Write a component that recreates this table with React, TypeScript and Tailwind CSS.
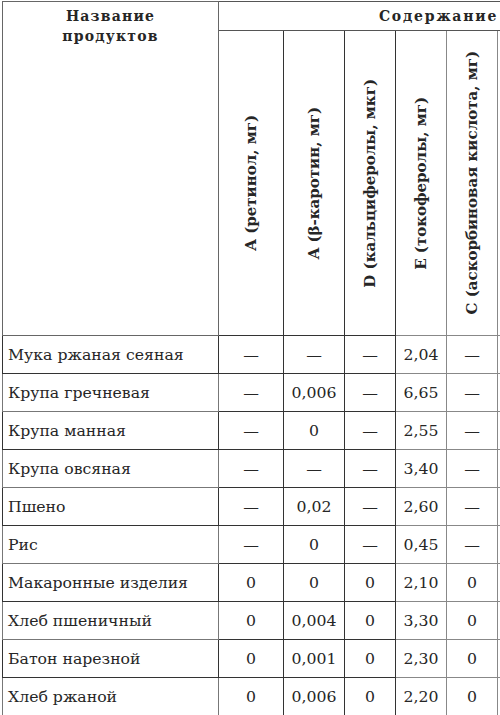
const rows: [string, string, string, string, string, string][] = [
  ['Мука ржаная сеяная', '—', '—', '—', '2,04', '—'],
  ['Крупа гречневая', '—', '0,006', '—', '6,65', '—'],
  ['Крупа манная', '—', '0', '—', '2,55', '—'],
  ['Крупа овсяная', '—', '—', '—', '3,40', '—'],
  ['Пшено', '—', '0,02', '—', '2,60', '—'],
  ['Рис', '—', '0', '—', '0,45', '—'],
  ['Макаронные изделия', '0', '0', '0', '2,10', '0'],
  ['Хлеб пшеничный', '0', '0,004', '0', '3,30', '0'],
  ['Батон нарезной', '0', '0,001', '0', '2,30', '0'],
  ['Хлеб ржаной', '0', '0,006', '0', '2,20', '0'],
]

const vitamins = [
  'A (ретинол, мг)',
  'A (β-каротин, мг)',
  'D (кальциферолы, мкг)',
  'E (токоферолы, мг)',
  'C (аскорбиновая кислота, мг)',
]

export default function App() {
  return (
    <div className="w-[500px] h-[715px] overflow-hidden bg-white pl-[2px] pt-[1px] [font-family:'DejaVu_Serif',serif] text-[#262626]">
      <table className="border-collapse table-fixed w-[652px]">
        <colgroup>
          <col className="w-[216px]" />
          <col className="w-[65px]" />
          <col className="w-[61px]" />
          <col className="w-[51px]" />
          <col className="w-[51px]" />
          <col className="w-[51px]" />
          <col className="w-[157px]" />
        </colgroup>
        <thead>
          <tr className="h-[29px]">
            <th
              rowSpan={2}
              className="border border-[#666] align-top pt-[4px] text-[14px] leading-[20px] font-bold tracking-[1.2px]"
            >
              Название
              <br />
              продуктов
            </th>
            <th
              colSpan={6}
              className="border border-[#555] text-center pl-[4px] text-[14px] font-bold tracking-[1.8px]"
            >
              Содержание
            </th>
          </tr>
          <tr className="h-[304px]">
            {vitamins.map((v, i) => (
              <th
                key={v}
                className={`border ${i >= 3 ? 'border-[#888]' : 'border-[#333]'} p-0 align-middle`}
              >
                <div className="flex h-[304px] items-center justify-center">
                  <span className="whitespace-nowrap text-[15px] font-bold [writing-mode:vertical-rl] rotate-180">
                    {v}
                  </span>
                </div>
              </th>
            ))}
            <th className="border border-[#888]"></th>
          </tr>
        </thead>
        <tbody>
          {rows.map((r, i) => (
            <tr key={r[0]} className="h-[38px] text-[15.7px]">
              <td
                className={`border ${i % 2 === 0 ? 'border-[#333]' : 'border-[#777]'} pl-[5px] text-left whitespace-nowrap`}
              >
                {r[0]}
              </td>
              {r.slice(1).map((c, j) => (
                <td
                  key={j}
                  className={`border ${j >= 3 ? 'border-[#888]' : 'border-[#333]'} text-center`}
                >
                  {c}
                </td>
              ))}
              <td className="border border-[#888]"></td>
            </tr>
          ))}
        </tbody>
      </table>
    </div>
  )
}
